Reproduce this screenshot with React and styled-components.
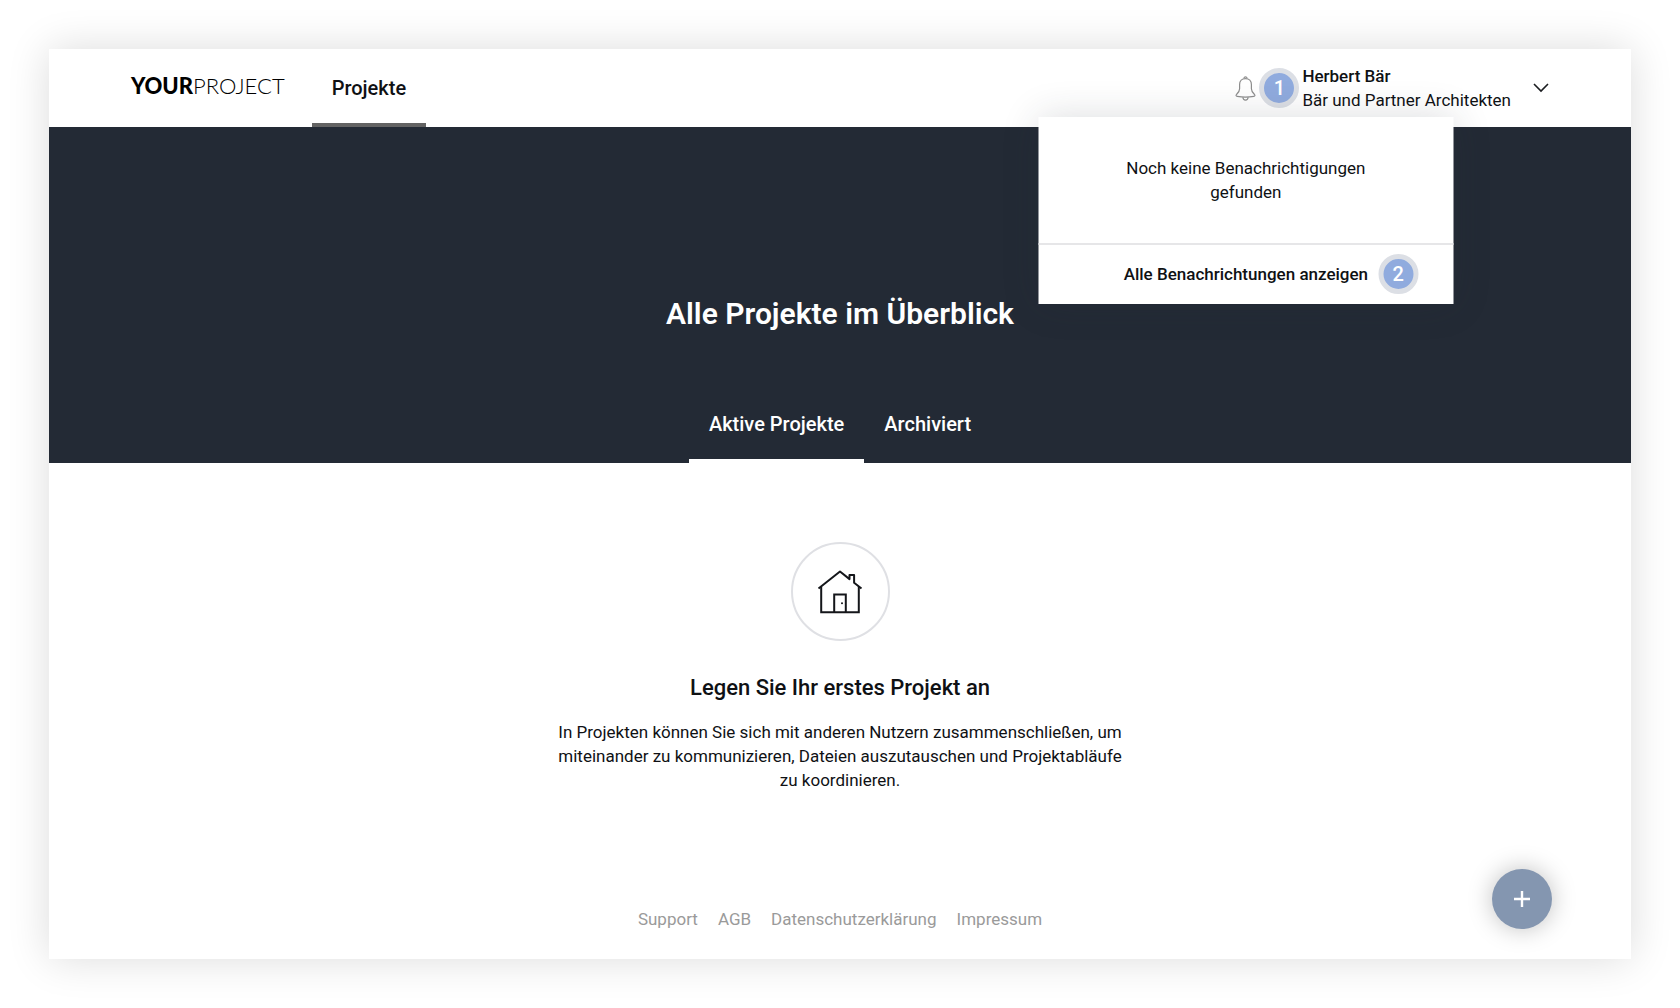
import React, { useState } from "react";
import styled, { createGlobalStyle } from "styled-components";

const GlobalStyle = createGlobalStyle`
  * {
    box-sizing: border-box;
  }

  body {
    margin: 0;
    background-color: #fff;
    color: #0f1114;
    font-family: Roboto, "Liberation Sans", sans-serif;
    font-size: 17px;
    line-height: 24px;
  }

  button {
    font: inherit;
    color: inherit;
    padding: 0;
    border: none;
    background: none;
    cursor: pointer;
  }

  a {
    color: inherit;
    text-decoration: none;
  }
`;

const Page = styled.div`
  min-height: 100vh;
  padding: 49px;
  display: flex;
`;

const Window = styled.div`
  flex: 1;
  display: flex;
  flex-direction: column;
  position: relative;
  background-color: #fff;
  box-shadow: 0 0 40px rgba(0, 0, 0, 0.14);
`;

const Header = styled.header`
  height: 78px;
  padding: 0 82px;
  display: flex;
  align-items: center;
`;

const Logo = styled.a`
  margin-right: 27px;
  padding-bottom: 4px;
  font-family: Lato, sans-serif;
  font-size: 22px;
  font-weight: 300;
  color: #000;
`;

const LogoBold = styled.span`
  font-weight: 900;
`;

const Nav = styled.nav`
  align-self: stretch;
  display: flex;
`;

const NavLink = styled.a`
  padding: 4px 20px 0;
  display: flex;
  align-items: center;
  border-bottom: 4px solid #636363;
  font-size: 20px;
  font-weight: 500;
`;

const Account = styled.div`
  margin-left: auto;
  display: flex;
  align-items: center;
`;

const Notifications = styled.div`
  margin-right: 46px;
  position: relative;
  display: flex;
`;

const BellButton = styled.button`
  display: flex;
`;

const Badge = styled.span`
  width: 40px;
  height: 40px;
  position: absolute;
  top: 50%;
  left: 100%;
  margin: -20px 0 0 ${(props) => props.$gap};
  display: flex;
  align-items: center;
  justify-content: center;
  border: 5px solid #dcdfe5;
  border-radius: 50%;
  background-color: #90abde;
  color: #fff;
  font-size: 20px;
  font-weight: 500;
`;

const Dropdown = styled.div`
  width: 415px;
  position: absolute;
  top: 41px;
  left: 50%;
  transform: translateX(-50%);
  z-index: 10;
  background-color: #fff;
  box-shadow: 0 0 36px rgba(35, 42, 53, 0.16);
  text-align: center;
`;

const DropdownMessage = styled.p`
  margin: 0;
  padding: 39px 80px 39px;
  border-bottom: 2px solid #e6e6e8;
`;

const DropdownFooter = styled.div`
  padding: 17px 0 18px;
  display: flex;
  justify-content: center;
`;

const ShowAll = styled.a`
  position: relative;
  font-weight: 500;
`;

const UserButton = styled.button`
  display: flex;
  align-items: center;
  gap: 22px;
  text-align: left;
`;

const UserName = styled.span`
  display: block;
  font-weight: 500;
`;

const Hero = styled.section`
  height: 336px;
  display: flex;
  flex-direction: column;
  align-items: center;
  justify-content: space-between;
  background-color: #232a35;
  color: #fff;
`;

const HeroTitle = styled.h1`
  margin: 167px 0 0;
  font-size: 30px;
  line-height: 40px;
  font-weight: 600;
`;

const Tabs = styled.div`
  display: flex;
`;

const Tab = styled.button`
  height: 78px;
  padding: 4px 20px 0;
  border-bottom: 4px solid ${(props) => (props.$active ? "#fff" : "transparent")};
  font-size: 20px;
  font-weight: 500;
`;

const Empty = styled.main`
  padding: 79px 20px 40px;
  display: flex;
  flex-direction: column;
  align-items: center;
  text-align: center;
`;

const IconCircle = styled.div`
  width: 99px;
  height: 99px;
  display: flex;
  align-items: center;
  justify-content: center;
  border: 2px solid #dfe0e4;
  border-radius: 50%;
`;

const EmptyTitle = styled.h2`
  margin: 31px 0 16px;
  font-size: 22px;
  line-height: 32px;
  font-weight: 500;
`;

const EmptyText = styled.p`
  max-width: 576px;
  margin: 0;
`;

const Footer = styled.footer`
  margin-top: auto;
  padding-bottom: 28px;
  display: flex;
  justify-content: center;
  gap: 20px;
  color: #9a9a9a;
`;

const AddButton = styled.button`
  width: 60px;
  height: 60px;
  position: absolute;
  right: 79px;
  bottom: 30px;
  display: flex;
  align-items: center;
  justify-content: center;
  border-radius: 50%;
  background-color: #8496b0;
  box-shadow: 0 0 24px rgba(0, 0, 0, 0.25);
`;

function BellIcon() {
  return (
    <svg width="21" height="25" viewBox="0 0 21 25" fill="none" stroke="#8e8e8e" strokeWidth="1.2">
      <path d="M8.9 2.5a1.6 1.6 0 1 1 3.2 0" />
      <path d="M10.5 2.6c-3.6 0-5.9 2.5-5.9 6v4.2c0 2.7-1.5 4-3 5.5-1 1-.6 1.800.6 2 5 .9 11.600.9 16.600 0 1.200-.2 1.600-1 .6-2-1.500-1.500-3-2.800-3-5.500V8.600c0-3.500-2.300-6-5.900-6z" />
      <path d="M7.900 21.200c.1 1.800 1.100 2.900 2.600 2.900s2.500-1.100 2.600-2.900" />
    </svg>
  );
}

function ChevronIcon() {
  return (
    <svg width="16" height="10" viewBox="0 0 16 10" fill="none" stroke="#1b1d20" strokeWidth="1.6">
      <path d="M1 1l7 7 7-7" />
    </svg>
  );
}

function HouseIcon() {
  return (
    <svg width="46" height="44" viewBox="0 0 46 44" fill="none" stroke="#14161a" strokeWidth="2">
      <path d="M1.500 18.500L23 1.500l9.500 7.600V5h4.600v7.800l7.400 5.700" strokeLinejoin="round" />
      <path d="M4.200 16.500v25.800h37.600V16.500" />
      <path d="M17.200 42V24.500h11.600V42" />
      <circle cx="25" cy="33.200" r="1" fill="#14161a" stroke="none" />
    </svg>
  );
}

function PlusIcon() {
  return (
    <svg width="16" height="16" viewBox="0 0 16 16" stroke="#fff" strokeWidth="2.4">
      <path d="M8 0v16M0 8h16" />
    </svg>
  );
}

function NotificationMenu() {
  const [isOpen, setOpen] = useState(true);

  return (
    <Notifications>
      <BellButton aria-label="Benachrichtigungen" onClick={() => setOpen(!isOpen)}>
        <BellIcon />
      </BellButton>
      <Badge $gap="3px">1</Badge>
      {isOpen && (
        <Dropdown>
          <DropdownMessage>Noch keine Benachrichtigungen gefunden</DropdownMessage>
          <DropdownFooter>
            <ShowAll href="#">
              Alle Benachrichtungen anzeigen
              <Badge $gap="10px">2</Badge>
            </ShowAll>
          </DropdownFooter>
        </Dropdown>
      )}
    </Notifications>
  );
}

export default function App() {
  const [tab, setTab] = useState("active");

  return (
    <Page>
      <GlobalStyle />
      <Window>
        <Header>
          <Logo href="#">
            <LogoBold>YOUR</LogoBold>PROJECT
          </Logo>
          <Nav>
            <NavLink href="#">Projekte</NavLink>
          </Nav>
          <Account>
            <NotificationMenu />
            <UserButton>
              <span>
                <UserName>Herbert Bär</UserName>
                Bär und Partner Architekten
              </span>
              <ChevronIcon />
            </UserButton>
          </Account>
        </Header>
        <Hero>
          <HeroTitle>Alle Projekte im Überblick</HeroTitle>
          <Tabs>
            <Tab $active={tab === "active"} onClick={() => setTab("active")}>
              Aktive Projekte
            </Tab>
            <Tab $active={tab === "archived"} onClick={() => setTab("archived")}>
              Archiviert
            </Tab>
          </Tabs>
        </Hero>
        <Empty>
          <IconCircle>
            <HouseIcon />
          </IconCircle>
          <EmptyTitle>Legen Sie Ihr erstes Projekt an</EmptyTitle>
          <EmptyText>
            In Projekten können Sie sich mit anderen Nutzern zusammenschließen, um
            miteinander zu kommunizieren, Dateien auszutauschen und Projektabläufe zu
            koordinieren.
          </EmptyText>
        </Empty>
        <Footer>
          <a href="#">Support</a>
          <a href="#">AGB</a>
          <a href="#">Datenschutzerklärung</a>
          <a href="#">Impressum</a>
        </Footer>
        <AddButton aria-label="Projekt anlegen">
          <PlusIcon />
        </AddButton>
      </Window>
    </Page>
  );
}
